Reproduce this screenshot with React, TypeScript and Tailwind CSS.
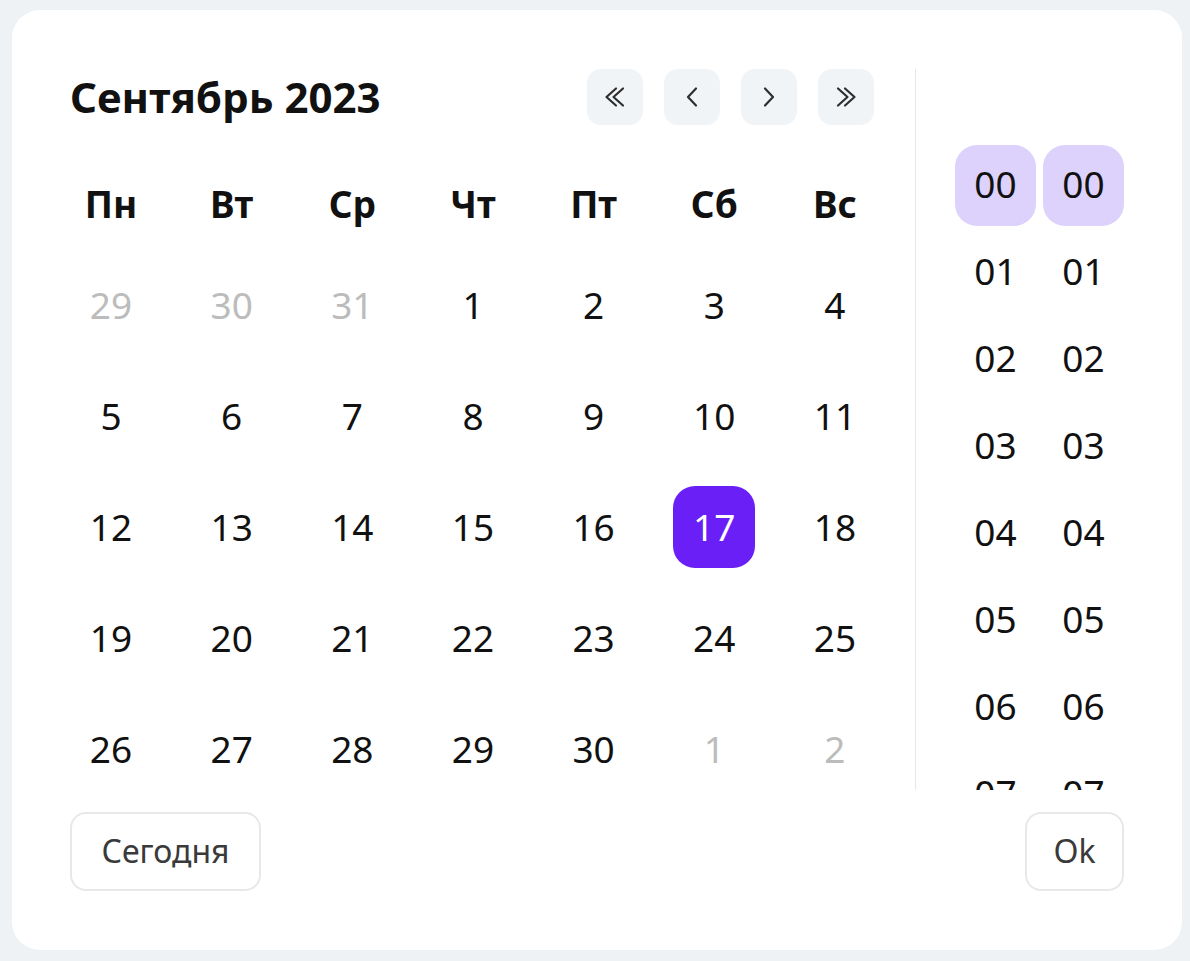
import { ReactNode } from "react";

const weekDays = ["Пн", "Вт", "Ср", "Чт", "Пт", "Сб", "Вс"];

const days = [
    { n: 29, out: true }, { n: 30, out: true }, { n: 31, out: true },
    ...Array.from({ length: 30 }, (_, i) => ({ n: i + 1, out: false })),
    { n: 1, out: true }, { n: 2, out: true },
];

const hours = Array.from({ length: 8 }, (_, i) => String(i).padStart(2, "0"));

const NavButton = ({ children }: { children: ReactNode }) => (
    <button className="flex h-[56px] w-[56px] items-center justify-center rounded-[14px] bg-[#f1f4f7] text-[#2e2e2e]">
        {children}
    </button>
);

const Chevron = ({ paths }: { paths: string[] }) => (
    <svg width="28" height="28" viewBox="0 0 28 28" fill="none" stroke="currentColor" strokeWidth="2.2" strokeLinecap="round" strokeLinejoin="round">
        {paths.map((d) => (
            <path key={d} d={d} />
        ))}
    </svg>
);

const TimeColumn = () => (
    <div className="flex w-[81px] flex-col gap-[6px]">
        {hours.map((h, i) => (
            <div
                key={h}
                className={`flex h-[81px] w-[81px] shrink-0 items-center justify-center rounded-[22px] pb-[3px] text-[37px] text-[#111] ${i === 0 ? "bg-[#ddd2fc]" : ""}`}
            >
                {h}
            </div>
        ))}
    </div>
);

export default function App() {
    return (
        <div
            className="h-[961px] w-[1190px] bg-[#eef2f5] pb-[11px] pl-[12px] pr-[8px] pt-[10px]"
            style={{ fontFamily: '"Noto Sans", sans-serif' }}
        >
            <div className="flex h-[940px] w-[1170px] flex-col rounded-[28px] bg-white px-[58px] pb-[59px] pt-[59px]">
                <div className="flex h-[721px]">
                    {/* calendar */}
                    <div className="flex w-[806px] flex-col">
                        <div className="flex h-[56px] items-center justify-between pr-[2px]">
                            <h1 className="text-[42px] font-bold leading-none text-[#111]">Сентябрь 2023</h1>
                            <div className="flex gap-[21px]">
                                <NavButton>
                                    <Chevron paths={["M15 5.5 L5.5 14 L15 22.5", "M22 5.5 L12.5 14 L22 22.5"]} />
                                </NavButton>
                                <NavButton>
                                    <Chevron paths={["M18 5.5 L10 14 L18 22.5"]} />
                                </NavButton>
                                <NavButton>
                                    <Chevron paths={["M10 5.5 L18 14 L10 22.5"]} />
                                </NavButton>
                                <NavButton>
                                    <Chevron paths={["M6 5.5 L15.5 14 L6 22.5", "M13 5.5 L22.5 14 L13 22.5"]} />
                                </NavButton>
                            </div>
                        </div>
                        <div className="mt-[39px] grid grid-cols-[repeat(7,82px)] justify-between">
                            {weekDays.map((d) => (
                                <div key={d} className="flex h-[82px] items-center justify-center pb-[2px] text-[37px] font-bold text-[#111]">
                                    {d}
                                </div>
                            ))}
                        </div>
                        <div className="mt-[18px] grid grid-cols-[repeat(7,82px)] justify-between gap-y-[29px]">
                            {days.map((d, i) => {
                                const selected = !d.out && d.n === 17;
                                return (
                                    <div
                                        key={i}
                                        className={`flex h-[82px] items-center justify-center rounded-[22px] text-[37px] ${
                                            selected ? "bg-[#6a1ff6] text-white" : d.out ? "text-[#bcbcbc]" : "text-[#111]"
                                        }`}
                                    >
                                        {d.n}
                                    </div>
                                );
                            })}
                        </div>
                    </div>
                    <div className="ml-[39px] w-px bg-[#e4e7eb]" />
                    {/* time */}
                    <div className="ml-[39px] flex gap-[7px] overflow-hidden pt-[76px]">
                        <TimeColumn />
                        <TimeColumn />
                    </div>
                </div>
                <div className="mt-[22px] flex justify-between">
                    <button className="h-[79px] w-[191px] rounded-[16px] border-2 border-[#e6e8ea] pb-[2px] text-[32px] text-[#3a3a3a]">
                        Сегодня
                    </button>
                    <button className="h-[79px] w-[99px] rounded-[16px] border-2 border-[#e6e8ea] pb-[2px] text-[32px] text-[#3a3a3a]">
                        Ok
                    </button>
                </div>
            </div>
        </div>
    );
}
